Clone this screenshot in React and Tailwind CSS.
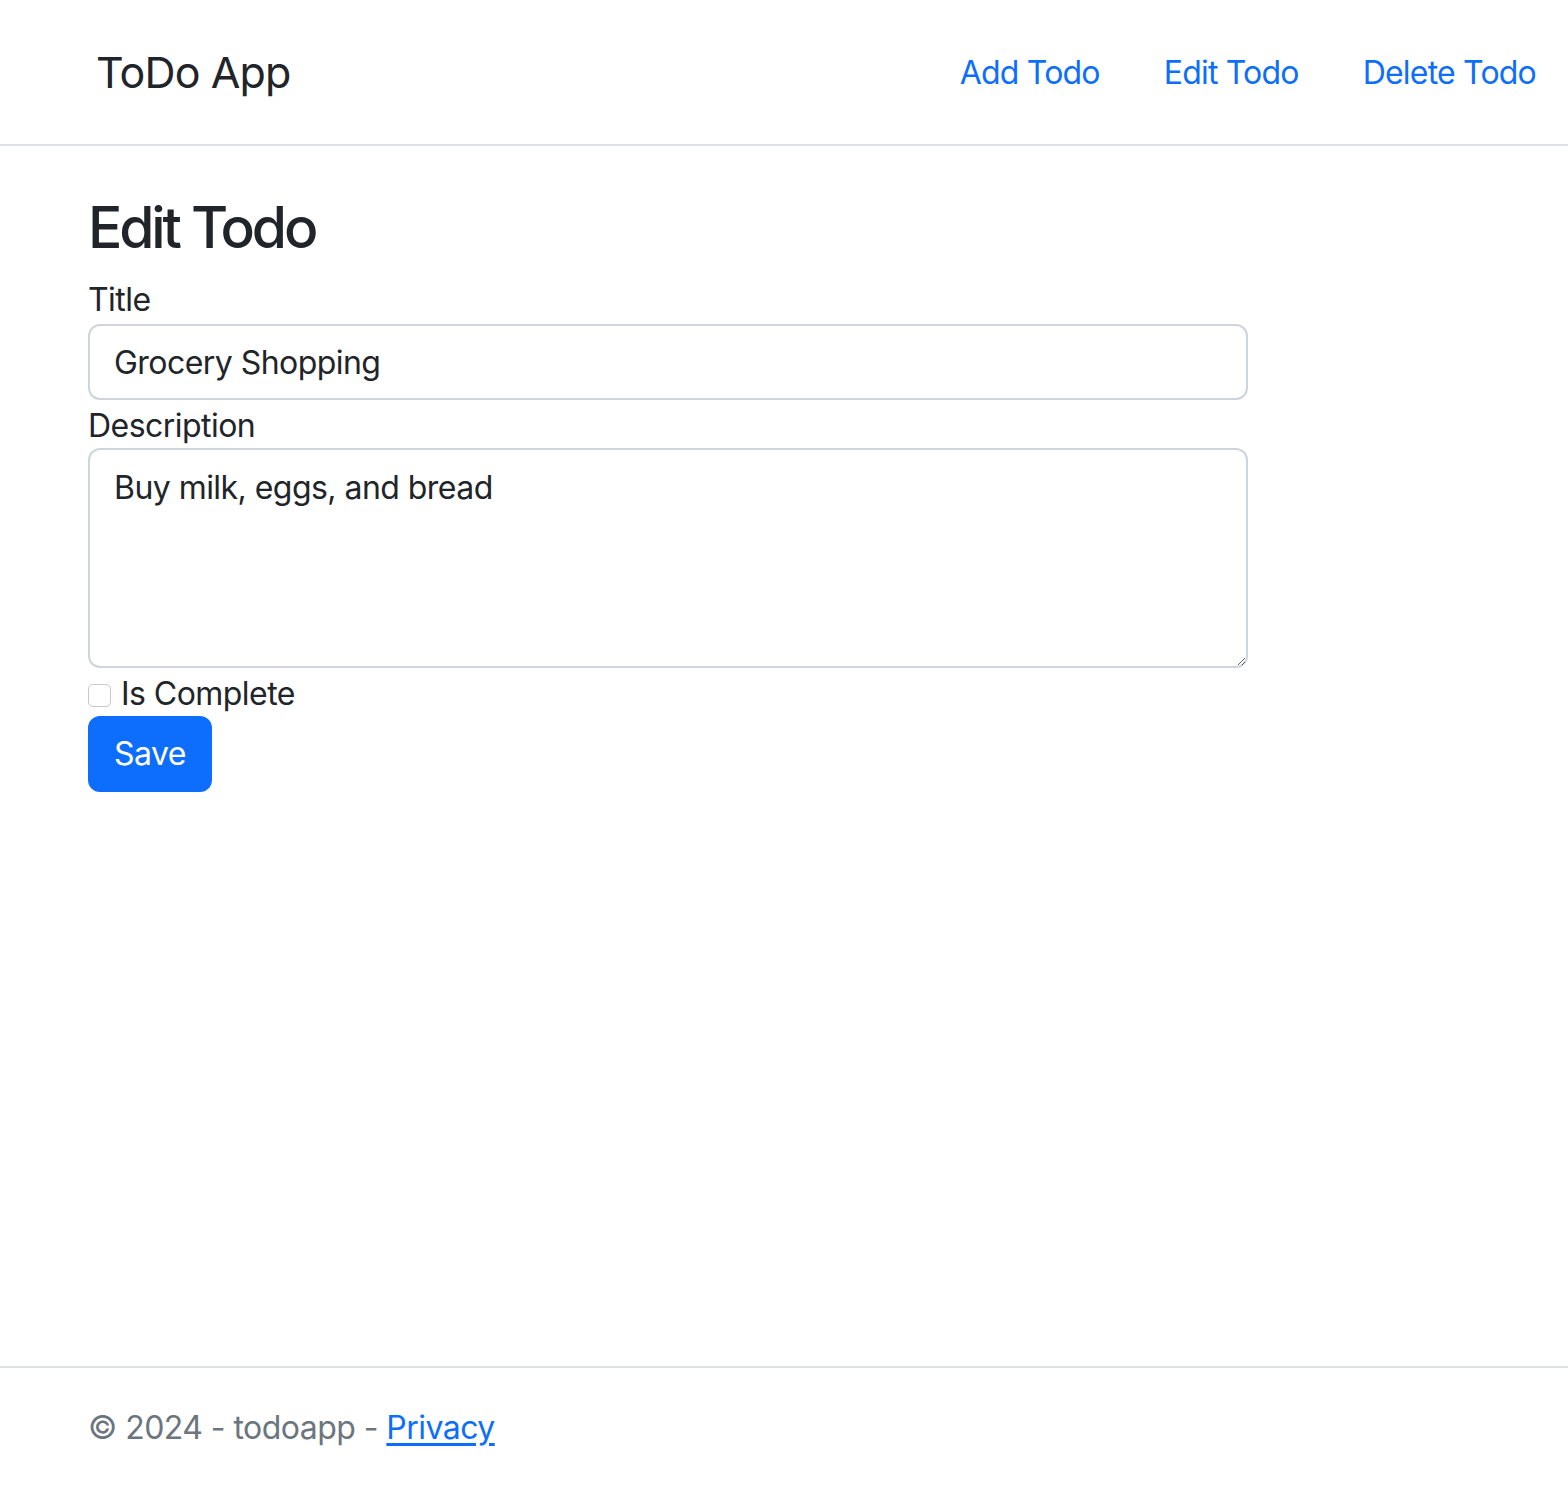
import React, { useState } from 'react';

const NavLink = ({ children }) => (
  <a href="#" className="px-8 text-[32px] leading-[48px] tracking-[-0.025em] text-[#0d6efd]">
    {children}
  </a>
);

export default function App() {
  const [title, setTitle] = useState('Grocery Shopping');
  const [description, setDescription] = useState('Buy milk, eggs, and bread');
  const [isComplete, setIsComplete] = useState(false);

  return (
    <div
      className="min-h-screen flex flex-col bg-white text-[#212529] tracking-[-0.034em]"
      style={{ fontFamily: 'Inter, "Liberation Sans", sans-serif' }}
    >
      {/* Navbar */}
      <header className="h-[146px] border-b-2 border-[#dee2e6] flex items-center justify-between pl-[96px]">
        <a href="#" className="text-[43px] leading-[60px] tracking-[-0.02em] text-[#212529]">
          ToDo App
        </a>
        <nav className="flex items-center pt-[2px]">
          <NavLink>Add Todo</NavLink>
          <NavLink>Edit Todo</NavLink>
          <NavLink>Delete Todo</NavLink>
        </nav>
      </header>

      {/* Main */}
      <main className="flex-1 px-[88px] pt-[46px]">
        <h2 className="text-[57px] leading-[72px] font-medium tracking-[-0.055em] mb-[12px]">Edit Todo</h2>
        <form className="w-[1160px]" onSubmit={(e) => e.preventDefault()}>
          <label htmlFor="title" className="block text-[32px] leading-[48px]">
            Title
          </label>
          <input
            id="title"
            value={title}
            onChange={(e) => setTitle(e.target.value)}
            className="block w-full h-[76px] px-[24px] text-[32px] leading-[48px] border-2 border-[#ced4da] rounded-[12px] outline-none"
          />
          <label htmlFor="description" className="block text-[32px] leading-[48px] pt-[2px]">
            Description
          </label>
          <textarea
            id="description"
            value={description}
            onChange={(e) => setDescription(e.target.value)}
            className="block w-full h-[220px] -mt-[2px] px-[24px] pt-[14px] pb-[12px] text-[32px] leading-[48px] border-2 border-[#ced4da] rounded-[12px] outline-none"
          />
          <label className="flex items-center h-[48px]">
            <input
              type="checkbox"
              checked={isComplete}
              onChange={(e) => setIsComplete(e.target.checked)}
              className="appearance-none w-[23px] h-[23px] mt-[6px] border border-[#c8c8c8] rounded-[5px] bg-white checked:bg-[#0d6efd]"
            />
            <span className="ml-[10px] mt-[3px] text-[32px] leading-[48px]">Is Complete</span>
          </label>
          <button
            type="submit"
            className="h-[76px] px-[26px] bg-[#0d6efd] text-white text-[32px] leading-[48px] rounded-[12px]"
          >
            Save
          </button>
        </form>
      </main>

      {/* Footer */}
      <footer className="border-t-2 border-[#dee2e6] h-[122px] px-[88px] flex items-center text-[32px] text-[#6c757d]">
        <span>
          © 2024 - todoapp -{' '}
          <a href="#" className="text-[#0d6efd] underline underline-offset-[4px]">
            Privacy
          </a>
        </span>
      </footer>
    </div>
  );
}
